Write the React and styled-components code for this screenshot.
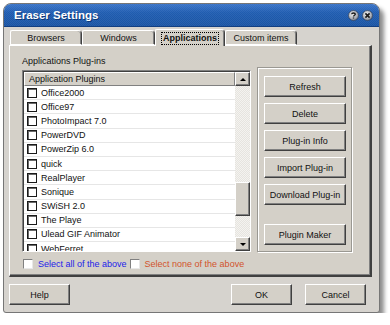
import React from "react";
import { styled, createGlobalStyle } from "styled-components";

const plugins = [
  "Office2000",
  "Office97",
  "PhotoImpact 7.0",
  "PowerDVD",
  "PowerZip 6.0",
  "quick",
  "RealPlayer",
  "Sonique",
  "SWiSH 2.0",
  "The Playe",
  "Ulead GIF Animator",
  "WebFerret",
];

const sideButtons = ["Refresh", "Delete", "Plug-in Info", "Import Plug-in", "Download Plug-in"];

const tabs = [
  { label: "Browsers", width: 72 },
  { label: "Windows", width: 73 },
  { label: "Applications", width: 70, active: true },
  { label: "Custom items", width: 72 },
];

const App = () => {
  return (
    <>
      <GlobalStyle />
      <Window>
        <TitleBar>
          <Title>Eraser Settings</Title>
          <TitleIcons>
            <CircleIcon glyph="help" />
            <CircleIcon glyph="close" />
          </TitleIcons>
        </TitleBar>
        <Body>
          <TabStrip>
            {tabs.map((t) => (
              <Tab key={t.label} $active={t.active} $width={t.width}>
                {t.active ? <Focus>{t.label}</Focus> : t.label}
              </Tab>
            ))}
          </TabStrip>
          <Panel>
            <Label>Applications Plug-ins</Label>
            <Row>
              <ListBox>
                <ListColumn>
                  <Header>Application Plugins</Header>
                  {plugins.map((p) => (
                    <Item key={p}>
                      <ListCheck />
                      {p}
                    </Item>
                  ))}
                </ListColumn>
                <ScrollBar>
                  <Arrow>
                    <ArrowGlyph />
                  </Arrow>
                  <Track>
                    <Thumb />
                  </Track>
                  <Arrow>
                    <ArrowGlyph $down />
                  </Arrow>
                </ScrollBar>
              </ListBox>
              <Group>
                {sideButtons.map((b) => (
                  <Button key={b} $width={82}>
                    {b}
                  </Button>
                ))}
                <Button $width={82} $top={13}>
                  Plugin Maker
                </Button>
              </Group>
            </Row>
            <SelectRow>
              <Check />
              <SelectText $color="#1d22e8">Select all of the above</SelectText>
              <Check $gap={3} />
              <SelectText $color="#d2532c">Select none of the above</SelectText>
            </SelectRow>
          </Panel>
          <Footer>
            <Button $width={61}>Help</Button>
            <Spacer />
            <Button $width={61}>OK</Button>
            <Button $width={61} $left={13}>
              Cancel
            </Button>
          </Footer>
        </Body>
      </Window>
    </>
  );
};

const CircleIcon = ({ glyph }) => (
  <svg width="11" height="11" viewBox="0 0 11 11">
    <defs>
      <radialGradient id={"g" + glyph} cx="40%" cy="35%" r="70%">
        <stop offset="0%" stopColor="#f2f2f2" />
        <stop offset="70%" stopColor="#a8acb4" />
        <stop offset="100%" stopColor="#6c7078" />
      </radialGradient>
    </defs>
    <circle cx="5.5" cy="5.5" r="5" fill={"url(#g" + glyph + ")"} stroke="#3a4a66" strokeWidth="0.8" />
    {glyph === "close" ? (
      <path d="M3.4 3.4 L7.6 7.6 M7.6 3.4 L3.4 7.6" stroke="#1b1b1b" strokeWidth="1.6" />
    ) : (
      <path
        d="M3.7 4.2 C3.7 2.6 7.3 2.6 7.3 4.2 C7.3 5.3 5.5 5.3 5.5 6.6 M5.5 7.6 L5.5 8.6"
        stroke="#1b1b1b"
        strokeWidth="1.4"
        fill="none"
      />
    )}
  </svg>
);

const GlobalStyle = createGlobalStyle`
  body {
    margin: 0;
    background: #ffffff;
    font-family: "Liberation Sans", Arial, sans-serif;
  }
`;

const Window = styled.div`
  box-sizing: border-box;
  width: 377px;
  height: 310px;
  margin: 3px 0 0 3px;
  display: flex;
  flex-direction: column;
  background: #d6d3ce;
  border: 1px solid #767676;
  border-radius: 8px 8px 3px 3px;
  box-shadow: 4px 5px 4px rgba(0, 0, 0, 0.45);
  overflow: hidden;
`;

const TitleBar = styled.div`
  height: 22px;
  display: flex;
  align-items: center;
  padding: 0 6px 0 10px;
  background:
    repeating-conic-gradient(rgba(255, 255, 255, 0.06) 0 25%, transparent 0 50%) 0 0 / 2px 2px,
    linear-gradient(#3a74c8, #1f5cb0 40%, #1a54a4);
  border-bottom: 1px solid #123f82;
`;

const Title = styled.span`
  color: #ffffff;
  font-size: 11.5px;
  font-weight: bold;
  text-shadow: 1px 1px 0 #0f3877;
`;

const TitleIcons = styled.div`
  margin-left: auto;
  display: flex;
  gap: 3px;
  margin-top: 1px;
`;

const Body = styled.div`
  flex: 1;
  display: flex;
  flex-direction: column;
  padding: 2px 7px 7px 5px;
`;

const TabStrip = styled.div`
  display: flex;
  height: 16px;
  padding-left: 1px;
  align-items: flex-end;
  position: relative;
  z-index: 1;
`;

const Tab = styled.div`
  box-sizing: border-box;
  width: ${(p) => p.$width}px;
  height: ${(p) => (p.$active ? 17 : 15)}px;
  margin-bottom: ${(p) => (p.$active ? -1 : 0)}px;
  display: flex;
  align-items: center;
  justify-content: center;
  background: #d4d0c8;
  border: 1px solid #ffffff;
  border-right: 1px solid #404040;
  border-bottom: ${(p) => (p.$active ? "none" : "1px solid #ffffff")};
  border-radius: 2px 4px 0 0;
  box-shadow: inset -1px 0 0 #808080;
  font-size: 9px;
  font-weight: ${(p) => (p.$active ? "bold" : "normal")};
  color: #111111;
`;

const Focus = styled.span`
  padding: 0 1px;
  line-height: 11px;
  outline: 1px dotted #000000;
`;

const Panel = styled.div`
  box-sizing: border-box;
  height: 232px;
  display: flex;
  flex-direction: column;
  padding: 10px 0 0 12px;
  background: #d4d0c8;
  border-top: 1px solid #ffffff;
  border-left: 1px solid #ffffff;
  border-right: 2px solid #404040;
  border-bottom: 2px solid #404040;
  box-shadow: inset -1px -1px 0 #808080;
`;

const Label = styled.div`
  font-size: 9px;
  line-height: 11px;
  color: #111111;
`;

const Row = styled.div`
  display: flex;
  align-items: flex-start;
  gap: 6px;
`;

const ListBox = styled.div`
  box-sizing: border-box;
  width: 229px;
  height: 182px;
  margin-top: 3px;
  display: grid;
  grid-template-columns: 1fr 15px;
  background: #ffffff;
  border-top: 1px solid #808080;
  border-left: 1px solid #808080;
  border-right: 1px solid #ffffff;
  border-bottom: 1px solid #ffffff;
  box-shadow: inset 1px 1px 0 #404040;
  padding: 1px 0 0 1px;
  overflow: hidden;
`;

const ListColumn = styled.div`
  overflow: hidden;
`;

const Header = styled.div`
  box-sizing: border-box;
  height: 14px;
  padding-left: 4px;
  display: flex;
  align-items: center;
  font-size: 9px;
  color: #111111;
  background: #d4d0c8;
  border-top: 1px solid #ffffff;
  border-left: 1px solid #ffffff;
  border-bottom: 1px solid #808080;
  border-right: 1px solid #808080;
`;

const Item = styled.div`
  box-sizing: border-box;
  height: 14.2px;
  display: flex;
  align-items: center;
  padding-left: 3px;
  font-size: 9px;
  color: #111111;
  border-bottom: 1px solid #e6e6e6;
`;

const ListCheck = styled.span`
  box-sizing: border-box;
  width: 10px;
  height: 10px;
  margin-right: 4px;
  border: 1px solid #1a1a1a;
  box-shadow: inset 1px 1px 0 #6a6a6a;
  background: #ffffff;
`;

const ScrollBar = styled.div`
  display: flex;
  flex-direction: column;
  background: repeating-conic-gradient(#f4f3f0 0 25%, #e6e4df 0 50%) 0 0 / 2px 2px;
`;

const Arrow = styled.div`
  box-sizing: border-box;
  height: 14px;
  display: flex;
  align-items: center;
  justify-content: center;
  background: #d4d0c8;
  border-top: 1px solid #ffffff;
  border-left: 1px solid #ffffff;
  border-right: 1px solid #404040;
  border-bottom: 1px solid #404040;
  box-shadow: inset -1px -1px 0 #808080;
`;

const ArrowGlyph = styled.span`
  width: 0;
  height: 0;
  border-left: 3px solid transparent;
  border-right: 3px solid transparent;
  ${(p) => (p.$down ? "border-top: 3px solid #000;" : "border-bottom: 3px solid #000;")}
`;

const Track = styled.div`
  flex: 1;
  display: flex;
  flex-direction: column;
`;

const Thumb = styled.div`
  box-sizing: border-box;
  height: 34px;
  margin-top: 96px;
  background: #d4d0c8;
  border-top: 1px solid #ffffff;
  border-left: 1px solid #ffffff;
  border-right: 1px solid #404040;
  border-bottom: 1px solid #404040;
  box-shadow: inset -1px -1px 0 #808080;
`;

const Group = styled.div`
  box-sizing: border-box;
  width: 95px;
  height: 185px;
  display: flex;
  flex-direction: column;
  gap: 6px;
  padding: 8px 0 0 6px;
  border: 1px solid #9a9892;
  box-shadow: inset 1px 1px 0 #ffffff, 1px 1px 0 #ffffff;
`;

const Button = styled.div`
  box-sizing: border-box;
  width: ${(p) => p.$width}px;
  height: 21px;
  margin-top: ${(p) => p.$top || 0}px;
  margin-left: ${(p) => p.$left || 0}px;
  display: flex;
  align-items: center;
  justify-content: center;
  font-size: 9px;
  color: #111111;
  background: #d4d0c8;
  border-top: 1px solid #ffffff;
  border-left: 1px solid #ffffff;
  border-right: 1px solid #404040;
  border-bottom: 1px solid #404040;
  box-shadow: inset -1px -1px 0 #808080;
`;

const SelectRow = styled.div`
  display: flex;
  align-items: center;
  height: 12px;
  margin-top: 6px;
  padding-left: 1px;
`;

const Check = styled.span`
  box-sizing: border-box;
  width: 10px;
  height: 10px;
  margin-left: ${(p) => p.$gap || 0}px;
  background: #ffffff;
  border-top: 1px solid #808080;
  border-left: 1px solid #808080;
  border-right: 1px solid #e8e8e8;
  border-bottom: 1px solid #e8e8e8;
`;

const SelectText = styled.span`
  margin-left: 5px;
  font-size: 9px;
  color: ${(p) => p.$color};
`;

const Footer = styled.div`
  display: flex;
  margin-top: 7px;
  padding-right: 6px;
`;

const Spacer = styled.div`
  flex: 1;
`;

export default App;
